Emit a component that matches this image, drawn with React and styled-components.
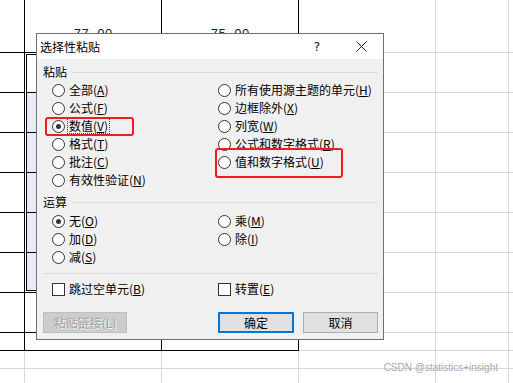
import styled, { createGlobalStyle } from "styled-components";

const GlobalStyle = createGlobalStyle`
  html, body {
    margin: 0;
    padding: 0;
    background: #fff;
  }
  body {
    font-family: "Noto Sans CJK SC", "Noto Sans", sans-serif;
  }
`;

// sheet geometry: widths/heights include the 1px right/bottom grid line
const COLS = [25, 137, 137, 137, 73, 120];
const ROWS = [13, 40, 40, 40, 40, 40, 40, 40, 40, 18, 18, 60];
const VALUES = { "1-1": "77.00", "1-2": "75.00" };

const Sheet = styled.div`
  position: relative;
  width: 100vw;
  height: 100vh;
  overflow: hidden;
  display: grid;
  grid-template-columns: ${COLS.map((c) => c + "px").join(" ")};
  grid-template-rows: ${ROWS.map((r) => r + "px").join(" ")};
`;

const Cell = styled.div`
  grid-column: ${(p) => p.$c + 1};
  grid-row: ${(p) => p.$r + 1};
  box-sizing: border-box;
  border-right: 1px solid ${(p) => (p.$dark ? "#000" : "#d0d7e5")};
  border-bottom: 1px solid ${(p) => (p.$dark ? "#000" : "#d0d7e5")};
  background: ${(p) => (p.$fill ? "#e8eaf5" : "#fff")};
  display: flex;
  justify-content: center;
  align-items: flex-start;
  padding-top: 15px;
  font-family: "Liberation Mono", monospace;
  font-size: 13px;
  line-height: 14px;
  color: #222;
`;

const Selection = styled.div`
  grid-column: 2 / 3;
  grid-row: 3 / 9;
  margin: -1px 0 0 -1px;
  border: 1px solid #000;
  box-shadow: inset 0 0 0 1px #fff, inset 0 0 0 2px #000;
  z-index: 1;
`;

const Dialog = styled.div`
  position: absolute;
  left: 36px;
  top: 33px;
  width: 348px;
  height: 307px;
  box-sizing: border-box;
  border: 1px solid #6f6f6f;
  background: #f0f0f0;
  display: flex;
  flex-direction: column;
  font-family: "Noto Sans CJK SC", "Noto Sans", sans-serif;
  font-size: 12px;
  color: #000;
  z-index: 2;
`;

const TitleBar = styled.div`
  height: 25px;
  background: #fff;
  display: flex;
  align-items: center;
  padding-left: 3px;
`;

const Title = styled.div`
  flex: 1;
  line-height: 14px;
`;

const TitleButton = styled.div`
  width: 44px;
  height: 25px;
  display: flex;
  align-items: center;
  justify-content: center;
  font-family: "DejaVu Sans", sans-serif;
  font-size: 12px;
  color: #111;
`;

const Body = styled.div`
  flex: 1;
  display: flex;
  flex-direction: column;
  padding: 0 5px 0 6px;
`;

const GroupHeader = styled.div`
  display: flex;
  align-items: center;
  height: 14px;
  margin-top: 6px;
  line-height: 14px;

  &::after {
    content: "";
    flex: 1;
    height: 1px;
    margin-left: 5px;
    background: #dcdcdc;
  }
`;

const OptionGrid = styled.div`
  display: grid;
  grid-template-columns: 166px 1fr;
  grid-auto-rows: 18px;
  padding-left: 9px;
  margin-top: ${(p) => p.$mt}px;
`;

const Option = styled.div`
  position: relative;
  display: flex;
  align-items: center;
  gap: 4px;
  line-height: 14px;
  white-space: nowrap;
`;

const Radio = styled.span`
  width: 13px;
  height: 13px;
  box-sizing: border-box;
  border: 1px solid #333;
  border-radius: 50%;
  background: #fff;
  display: flex;
  align-items: center;
  justify-content: center;

  &::after {
    content: "";
    display: ${(p) => (p.$checked ? "block" : "none")};
    width: 5px;
    height: 5px;
    border-radius: 50%;
    background: #333;
  }
`;

const Check = styled.span`
  width: 13px;
  height: 13px;
  box-sizing: border-box;
  border: 1px solid #333;
  background: #fff;
`;

const Label = styled.span`
  padding: 0 1px;
  margin-left: -1px;
  outline: ${(p) => (p.$focus ? "1px dotted #444" : "none")};
`;

const Mark = styled.span`
  position: absolute;
  left: ${(p) => p.$box[0]}px;
  top: ${(p) => p.$box[1]}px;
  width: ${(p) => p.$box[2]}px;
  height: ${(p) => p.$box[3]}px;
  box-sizing: border-box;
  border: 2px solid #ee1d23;
  border-radius: 3px;
  pointer-events: none;
`;

const Separator = styled.div`
  height: 1px;
  background: #dcdcdc;
  margin-top: 7px;
`;

const ButtonRow = styled.div`
  display: flex;
  margin-top: 14px;
  gap: 9px;
`;

const Button = styled.div`
  width: ${(p) => p.$w}px;
  height: 21px;
  box-sizing: border-box;
  display: flex;
  align-items: center;
  justify-content: center;
  line-height: 14px;
  background: ${(p) => (p.$disabled ? "#cccccc" : "#e1e1e1")};
  border: ${(p) =>
    p.$primary ? "2px solid #0078d7" : p.$disabled ? "1px solid #bfbfbf" : "1px solid #adadad"};
  color: ${(p) => (p.$disabled ? "#a3a3a3" : "#000")};
  text-shadow: ${(p) => (p.$disabled ? "1px 1px 0 #f4f4f4" : "none")};
  margin-left: ${(p) => (p.$push ? "auto" : "0")};
`;

const Watermark = styled.div`
  position: absolute;
  right: 15px;
  top: 362px;
  font-family: "Liberation Sans", Arial, sans-serif;
  font-size: 10px;
  line-height: 12px;
  color: #a9a9a9;
  z-index: 1;
`;

const pasteRows = [
  [{ t: "全部", k: "A" }, { t: "所有使用源主题的单元", k: "H" }],
  [{ t: "公式", k: "F" }, { t: "边框除外", k: "X" }],
  [{ t: "数值", k: "V", checked: true, focus: true, mark: [-7, 0, 89, 19] }, { t: "列宽", k: "W" }],
  [{ t: "格式", k: "T" }, { t: "公式和数字格式", k: "R" }],
  [{ t: "批注", k: "C" }, { t: "值和数字格式", k: "U", mark: [-3, -5, 128, 30] }],
  [{ t: "有效性验证", k: "N" }, null],
];

const opRows = [
  [{ t: "无", k: "O", checked: true }, { t: "乘", k: "M" }],
  [{ t: "加", k: "D" }, { t: "除", k: "I" }],
  [{ t: "减", k: "S" }, null],
];

function RadioOption({ opt }) {
  if (!opt) return <div />;
  return (
    <Option>
      <Radio $checked={opt.checked} />
      <Label $focus={opt.focus}>
        {opt.t}(<u>{opt.k}</u>)
      </Label>
      {opt.mark && <Mark $box={opt.mark} />}
    </Option>
  );
}

function CloseIcon() {
  return (
    <svg width="11" height="11" viewBox="0 0 11 11">
      <path d="M0.5 0.5 L10.5 10.5 M10.5 0.5 L0.5 10.5" stroke="#222" strokeWidth="1" fill="none" />
    </svg>
  );
}

export default function App() {
  const cells = [];
  ROWS.forEach((_, r) => {
    COLS.forEach((_, c) => {
      const dark = c <= 2 && r <= 9;
      const fill = c === 1 && r >= 3 && r <= 7;
      cells.push(
        <Cell key={r + "-" + c} $r={r} $c={c} $dark={dark} $fill={fill}>
          {VALUES[r + "-" + c]}
        </Cell>
      );
    });
  });

  return (
    <>
      <GlobalStyle />
      <Sheet>
        {cells}
        <Selection />
        <Dialog>
          <TitleBar>
            <Title>选择性粘贴</Title>
            <TitleButton>?</TitleButton>
            <TitleButton>
              <CloseIcon />
            </TitleButton>
          </TitleBar>
          <Body>
            <GroupHeader>粘贴</GroupHeader>
            <OptionGrid $mt={2}>
              {pasteRows.map((row, i) =>
                row.map((opt, j) => <RadioOption key={i + "-" + j} opt={opt} />)
              )}
            </OptionGrid>
            <GroupHeader>运算</GroupHeader>
            <OptionGrid $mt={3}>
              {opRows.map((row, i) =>
                row.map((opt, j) => <RadioOption key={i + "-" + j} opt={opt} />)
              )}
            </OptionGrid>
            <Separator />
            <OptionGrid $mt={6}>
              <Option>
                <Check />
                <span>
                  跳过空单元(<u>B</u>)
                </span>
              </Option>
              <Option>
                <Check />
                <span>
                  转置(<u>E</u>)
                </span>
              </Option>
            </OptionGrid>
            <ButtonRow>
              <Button $w={84} $disabled>
                粘贴链接(L)
              </Button>
              <Button $w={76} $primary $push>
                确定
              </Button>
              <Button $w={75}>取消</Button>
            </ButtonRow>
          </Body>
        </Dialog>
        <Watermark>CSDN @statistics+insight</Watermark>
      </Sheet>
    </>
  );
}
